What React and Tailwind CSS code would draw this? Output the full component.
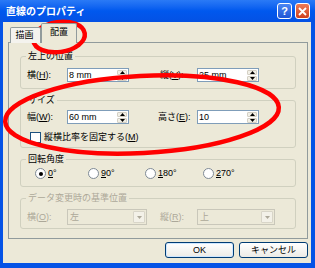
import React from "react";

const Arrow = ({ down = false, color = "#000" }) => (
  <svg width="5" height="3" viewBox="0 0 5 3">
    {down ? (
      <path d="M0 0 H5 L2.5 3 Z" fill={color} />
    ) : (
      <path d="M0 3 H5 L2.5 0 Z" fill={color} />
    )}
  </svg>
);

const Spin = ({ value }) => (
  <div className="flex h-[14px] w-[62px] border border-[#7f9db9] bg-white">
    <span className="flex-1 pl-[1px] leading-[12px]">{value}</span>
    <div className="flex w-[11px] flex-col gap-px py-px pr-px">
      <span className="flex flex-1 items-center justify-center rounded-[1px] border border-[#d4d0c4] bg-[#f1efe6]">
        <Arrow />
      </span>
      <span className="flex flex-1 items-center justify-center rounded-[1px] border border-[#d4d0c4] bg-[#f1efe6]">
        <Arrow down />
      </span>
    </div>
  </div>
);

const Combo = ({ value, width }) => (
  <div
    className={`flex h-[16px] border border-[#c9c7ba] bg-[#ece9d8] text-[#aca899] ${width}`}
  >
    <span className="flex-1 pl-[2px] leading-[14px]">{value}</span>
    <span className="m-px flex w-[12px] items-center justify-center rounded-[1px] border border-[#d8d5c8] bg-[#f3f1e8]">
      <Arrow down color="#aca899" />
    </span>
  </div>
);

const Radio = ({ checked, label, width }) => (
  <div className={`flex items-center gap-[2px] ${width}`}>
    <span className="flex h-[11px] w-[11px] items-center justify-center rounded-full border border-[#7f8a95] bg-white">
      {checked && <span className="h-[4px] w-[4px] rounded-full bg-black" />}
    </span>
    <span>{label}</span>
  </div>
);

const Group = ({ title, disabled, className, children }) => (
  <fieldset
    className={`rounded-[3px] border border-[#d0d0bf] ${className}`}
  >
    <legend
      className={`ml-[5px] px-[2px] leading-[13px] ${
        disabled ? "text-[#aca899]" : "text-black"
      }`}
    >
      {title}
    </legend>
    {children}
  </fieldset>
);

export default function App() {
  return (
    <div className="relative flex h-[268px] w-[315px] select-none flex-col overflow-hidden bg-[#0553e6] font-['Liberation_Sans','Noto_Sans_CJK_JP',sans-serif] text-[9px] leading-[11px] text-black">
      {/* title bar */}
      <div className="flex h-[22px] items-center bg-linear-to-b from-[#2a7af6] via-[#0058ee] to-[#0451e4] pl-[6px] pr-[5px]">
        <span className="text-[10px] font-bold text-white">直線のプロパティ</span>
        <div className="ml-auto flex gap-[3px]">
          <span className="flex h-[16px] w-[15px] items-center justify-center rounded-[3px] border border-white bg-linear-to-b from-[#4c86f2] to-[#1f55d6] text-[11px] font-bold leading-none text-white">
            ?
          </span>
          <span className="flex h-[16px] w-[15px] items-center justify-center rounded-[3px] border border-white bg-linear-to-b from-[#ec7a55] to-[#cf3f1c]">
            <svg width="9" height="9" viewBox="0 0 9 9">
              <path d="M1 1 L8 8 M8 1 L1 8" stroke="#fff" strokeWidth="1.8" />
            </svg>
          </span>
        </div>
      </div>

      {/* body */}
      <div className="mb-[5px] ml-[3px] mr-[4px] flex flex-1 flex-col bg-[#ece9d8] pl-[5px]">
        {/* tabs */}
        <div className="relative z-10 -mb-px mt-px flex h-[20px] items-end pl-[2px]">
          <div className="flex h-[16px] w-[31px] items-center justify-center rounded-t-[2px] border border-b-0 border-[#919b9c] bg-[#f4f3ee] pr-[2px]">
            描画
          </div>
          <div className="flex h-[20px] w-[36px] items-center justify-center rounded-t-[2px] border border-b-0 border-[#919b9c] bg-[#ece9d8] pb-[2px]">
            配置
          </div>
        </div>

        {/* panel */}
        <div className="flex h-[197px] w-[300px] flex-col gap-[5px] border border-[#919b9c] px-[11px] pt-[7px]">
          <Group title="左上の位置" className="pb-[6px] pt-[5px]">
            <div className="flex items-center pl-[6px]">
              <div className="flex w-[133px] items-center">
                <span className="w-[40px]">
                  横(<u>H</u>):
                </span>
                <Spin value="8 mm" />
              </div>
              <div className="flex items-center">
                <span className="w-[37px]">
                  縦(<u>V</u>):
                </span>
                <Spin value="25 mm" />
              </div>
            </div>
          </Group>

          <Group title="サイズ" className="pb-[3px] pt-[3px]">
            <div className="flex items-center pl-[6px]">
              <div className="flex w-[131px] items-center">
                <span className="w-[40px]">
                  幅(<u>W</u>):
                </span>
                <Spin value="60 mm" />
              </div>
              <div className="flex items-center">
                <span className="w-[39px]">
                  高さ(<u>E</u>):
                </span>
                <Spin value="10" />
              </div>
            </div>
            <div className="mt-[7px] flex h-[13px] items-center gap-[3px] pl-[9px]">
              <span className="h-[11px] w-[11px] border border-[#1c5180] bg-white" />
              <span>
                縦横比率を固定する(<u>M</u>)
              </span>
            </div>
          </Group>

          <Group title="回転角度" className="pb-[6px] pt-px">
            <div className="flex h-[13px] items-center pl-[14px]">
              <Radio
                checked
                width="w-[53px]"
                label={
                  <>
                    <u>0</u>°
                  </>
                }
              />
              <Radio
                width="w-[57px]"
                label={
                  <>
                    <u>9</u>0°
                  </>
                }
              />
              <Radio
                width="w-[58px]"
                label={
                  <>
                    <u>1</u>80°
                  </>
                }
              />
              <Radio
                width="w-[58px]"
                label={
                  <>
                    <u>2</u>70°
                  </>
                }
              />
            </div>
          </Group>

          <Group
            title="データ変更時の基準位置"
            disabled
            className="pb-[3px] pt-[4px]"
          >
            <div className="flex items-center pl-[6px] text-[#aca899]">
              <div className="flex w-[133px] items-center">
                <span className="w-[40px]">
                  横(<u>O</u>):
                </span>
                <Combo value="左" width="w-[80px]" />
              </div>
              <div className="flex items-center">
                <span className="w-[37px]">
                  縦(<u>R</u>):
                </span>
                <Combo value="上" width="w-[78px]" />
              </div>
            </div>
          </Group>
        </div>

        {/* buttons */}
        <div className="mt-[3px] flex w-[300px] justify-end gap-[5px]">
          <button className="h-[16px] w-[69px] rounded-[3px] border border-[#003c74] bg-linear-to-b from-white to-[#ecebe6] leading-[14px] shadow-[inset_0_0_0_1px_#cee7ff]">
            OK
          </button>
          <button className="h-[16px] w-[69px] rounded-[3px] border border-[#003c74] bg-linear-to-b from-white to-[#ecebe6] leading-[14px]">
            キャンセル
          </button>
        </div>
      </div>

      {/* red annotation marks */}
      <svg
        className="pointer-events-none absolute left-0 top-0"
        width="315"
        height="268"
        viewBox="0 0 315 268"
      >
        <ellipse
          cx="59"
          cy="37"
          rx="26"
          ry="15"
          transform="rotate(-8 59 37)"
          fill="none"
          stroke="#f00"
          strokeWidth="4.5"
        />
        <ellipse
          cx="142"
          cy="114.5"
          rx="137"
          ry="38.5"
          transform="rotate(-3 142 114.5)"
          fill="none"
          stroke="#f00"
          strokeWidth="4.5"
        />
      </svg>
    </div>
  );
}
